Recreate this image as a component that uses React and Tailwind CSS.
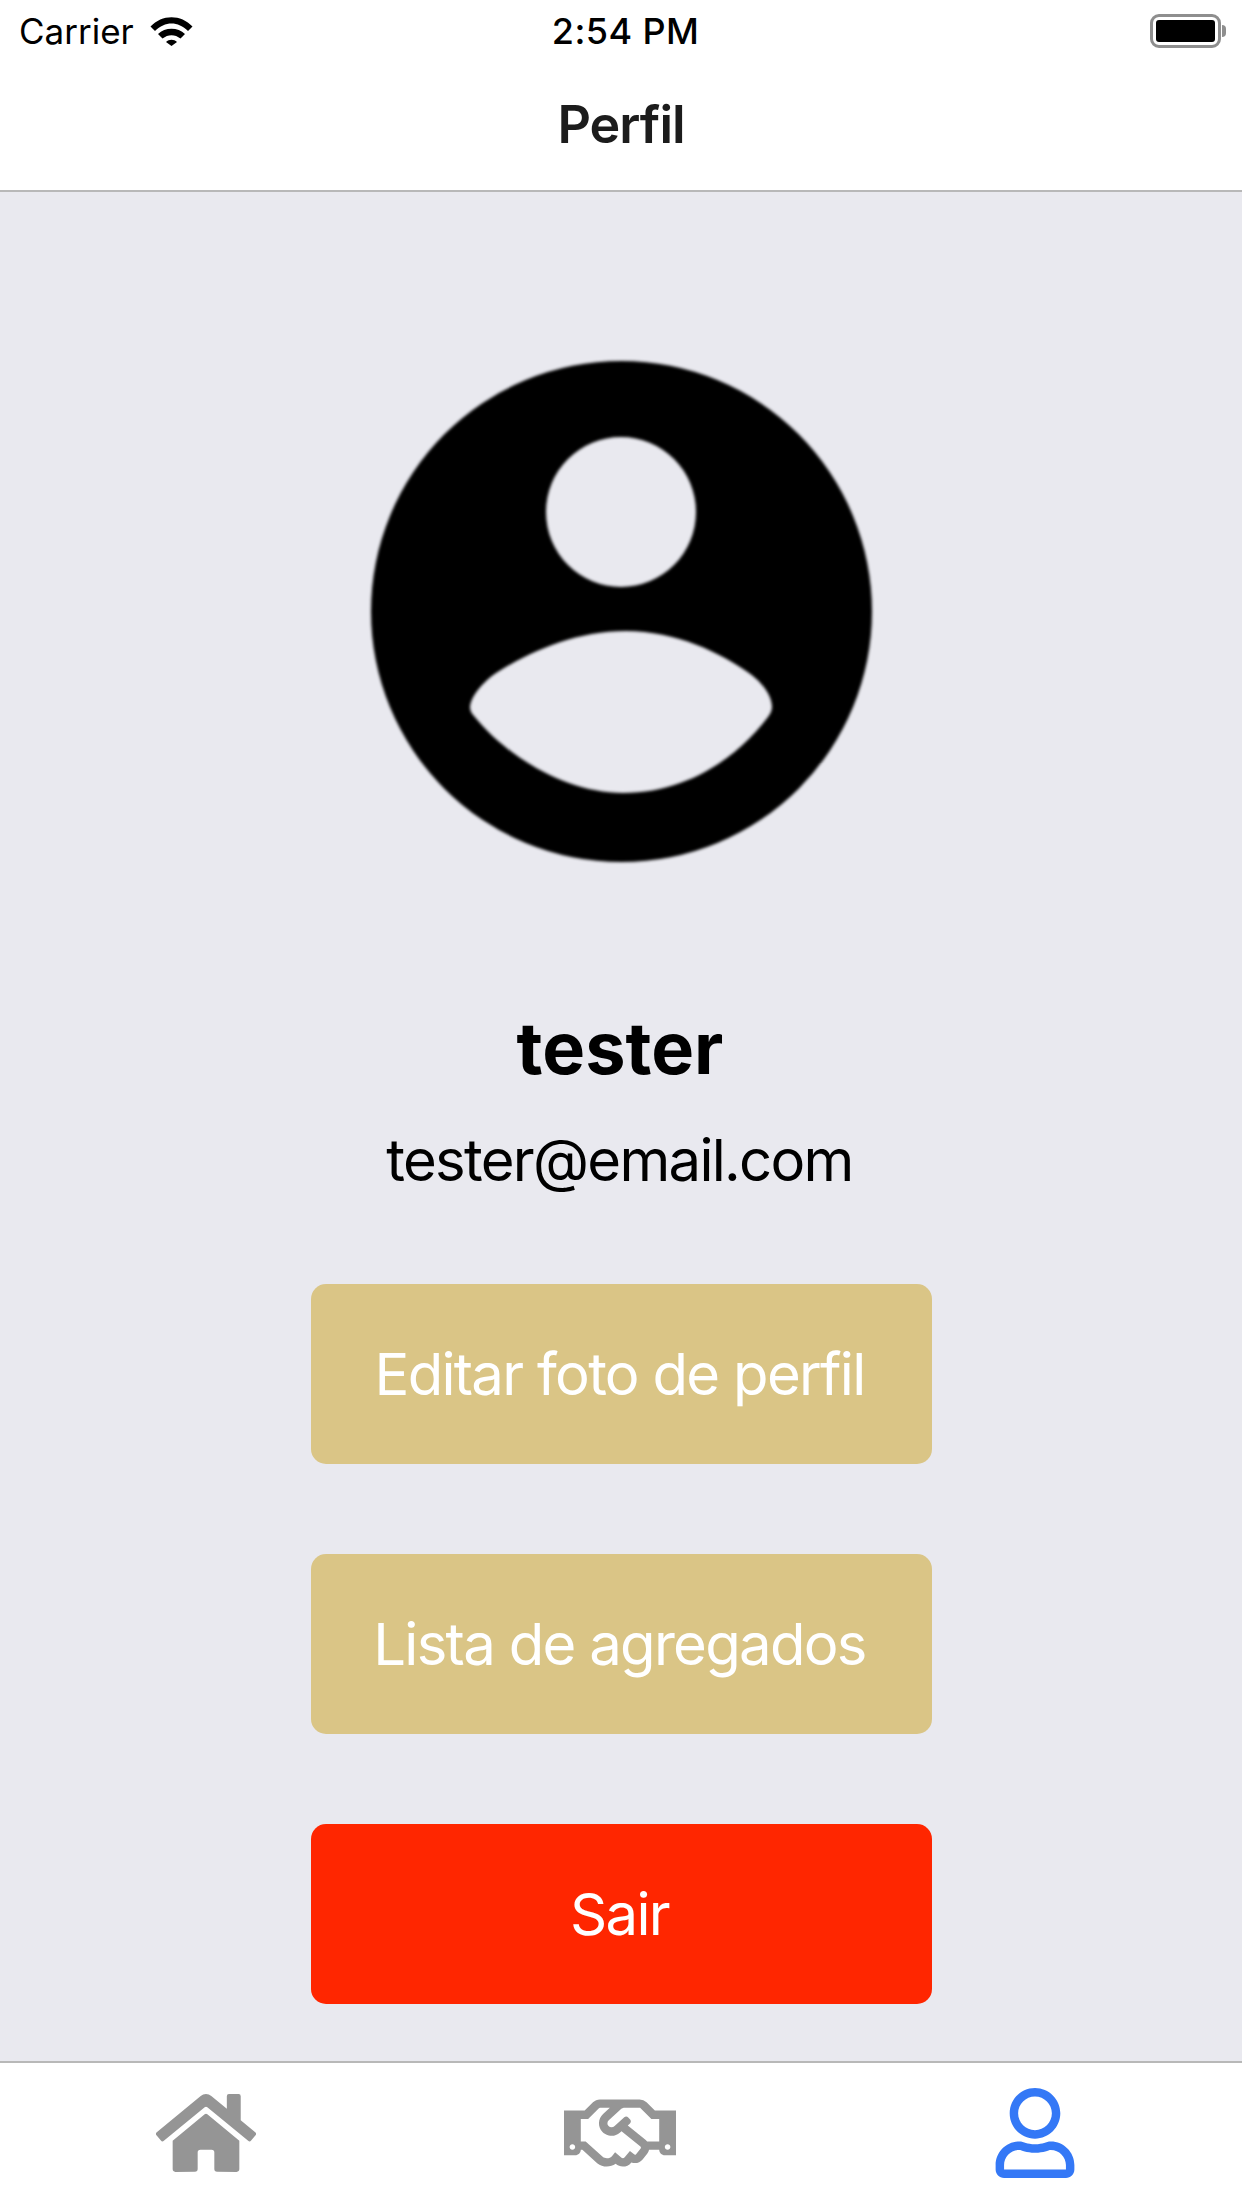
import { FaHome, FaRegHandshake, FaRegUser } from "react-icons/fa";

function WifiIcon() {
  return (
    <svg width="43" height="29" viewBox="0 0 43 29" fill="black">
      <path d="M0.5 9.5C12 -3 31 -3 42.5 9.5L38 14C28 4 15 4 5 14Z" />
      <path d="M8 17C15 10 28 10 35 17L30.5 21.5C25 17 18 17 12.5 21.5Z" />
      <path d="M16 25C19 22 24 22 27 25L21.5 29Z" />
    </svg>
  );
}

function Battery() {
  return (
    <div className="flex items-center">
      <div className="w-[71px] h-[34px] rounded-[9px] border-[3px] border-[#8e8e8e] p-[3px]">
        <div className="w-full h-full rounded-[3px] bg-black" />
      </div>
      <div className="w-[4px] h-[12px] ml-[1px] rounded-r-full bg-[#8e8e8e]" />
    </div>
  );
}

function StatusBar() {
  return (
    <div className="grid grid-cols-3 items-center h-[60px] pl-[19px] pr-[16px] bg-white text-black">
      <div className="flex items-center gap-[16px]">
        <span className="text-[35px] leading-[62px]">Carrier</span>
        <WifiIcon />
      </div>
      <div className="pl-[6px] text-center text-[36px] leading-[62px] font-medium tracking-[0.4px]">2:54 PM</div>
      <div className="flex justify-end">
        <Battery />
      </div>
    </div>
  );
}

function Avatar() {
  return (
    <svg width="501" height="501" viewBox="0 0 501 501" className="blur-[1.5px]">
      <path
        fillRule="evenodd"
        fill="black"
        d="M250.5 0A250.5 250.5 0 1 0 250.5 501A250.5 250.5 0 1 0 250.5 0ZM250 76A75 75 0 1 1 250 226A75 75 0 1 1 250 76ZM99 346C100 335 112 321 125 312C160 290 205 270 255 270C305 270 350 292 378 312C392 322 401 335 401 346C401 350 399 353 397 356C365 398 315 432 252 432C195 432 135 395 103 355C100 352 99 349 99 346Z"
      />
    </svg>
  );
}

function ActionButton({ label, color }) {
  return (
    <button className={`w-[621px] h-[180px] pr-[3px] rounded-[15px] text-white text-[58px] tracking-[-1.7px] font-normal ${color}`}>
      {label}
    </button>
  );
}

export default function App() {
  return (
    <div className="w-[1242px] h-[2208px] flex flex-col bg-[#e9e9ef] font-['Inter','Liberation_Sans',sans-serif] overflow-hidden">
      <StatusBar />
      <div className="h-[132px] flex items-center justify-center bg-white border-b-2 border-[#b8b8b8]">
        <span className="text-[52px] tracking-[-1px] font-semibold text-[#1c1c1c]">Perfil</span>
      </div>

      <main className="flex-1 flex flex-col items-center pt-[169px]">
        <Avatar />
        <h1 className="mt-[146px] pr-[2px] text-[72px] leading-[80px] font-bold text-black">tester</h1>
        <p className="mt-[38px] pr-[3px] text-[58px] leading-[68px] tracking-[-1.7px] text-black">tester@email.com</p>
        <div className="mt-[90px] flex flex-col gap-[90px]">
          <ActionButton label="Editar foto de perfil" color="bg-[#dac586]" />
          <ActionButton label="Lista de agregados" color="bg-[#dac586]" />
          <ActionButton label="Sair" color="bg-[#ff2600]" />
        </div>
      </main>

      <nav className="h-[147px] pb-[5px] grid grid-cols-3 items-center bg-white border-t-2 border-[#b8b8b8] text-[#959595]">
        <div className="flex justify-center pr-[2px]"><FaHome size={100} /></div>
        <div className="flex justify-center pr-[2px]"><FaRegHandshake size={112} /></div>
        <div className="flex justify-center text-[#3478f6]"><FaRegUser size={90} /></div>
      </nav>
    </div>
  );
}
